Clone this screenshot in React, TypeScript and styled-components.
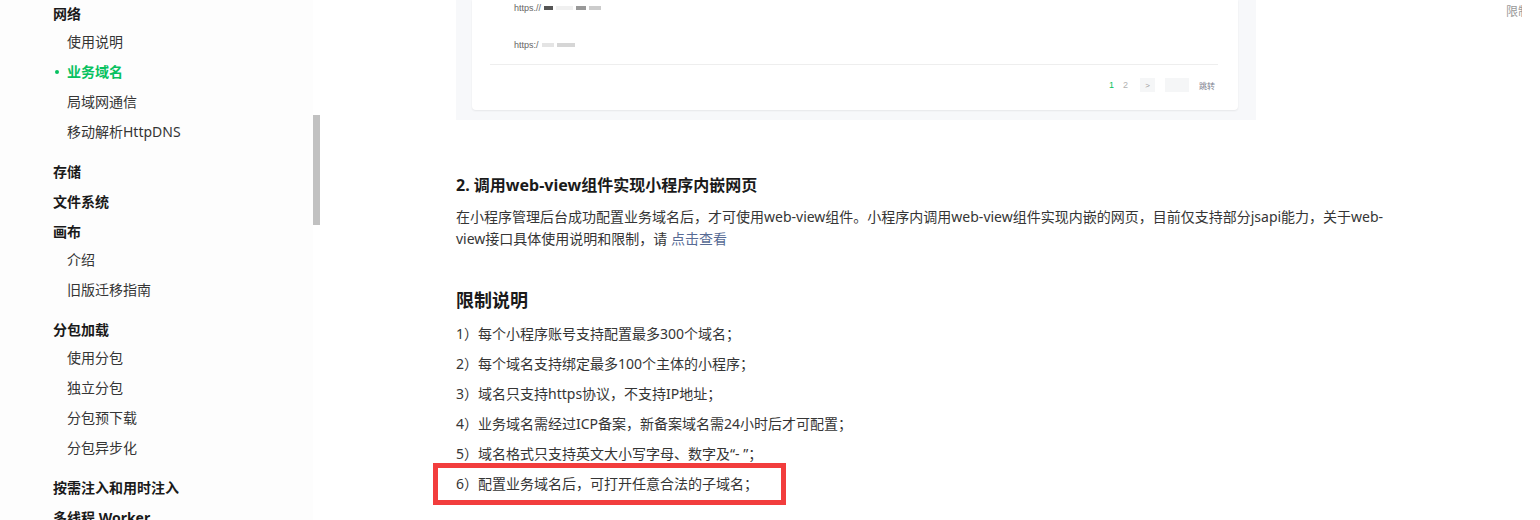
import styled, { createGlobalStyle } from 'styled-components';

const GlobalStyle = createGlobalStyle`
    html, body {
        margin: 0;
        padding: 0;
        background: #ffffff;
        font-family: "Noto Sans", "Noto Sans CJK SC", sans-serif;
        color: #333333;
        overflow: hidden;
    }
`;

const Page = styled.div`
    display: flex;
    width: 1540px;
    height: 520px;
    overflow: hidden;
`;

/* ---------- sidebar ---------- */

const Sidebar = styled.aside`
    display: flex;
    width: 320px;
    flex-shrink: 0;
`;

const Nav = styled.nav`
    width: 313px;
    padding: 2px 0 0 53px;
    box-sizing: border-box;
    background: #fdfdfd;
`;

const Group = styled.div`
    margin-bottom: 6px;
`;

const GroupTitle = styled.div`
    height: 24px;
    line-height: 24px;
    font-size: 14px;
    font-weight: 700;
    color: #1a1a1a;
    white-space: nowrap;
`;

const SubList = styled.ul`
    list-style: none;
    margin: 0;
    padding: 0 0 8px 0;
`;

const SubItem = styled.li<{ $active?: boolean }>`
    position: relative;
    height: 30px;
    line-height: 31px;
    padding-left: 14px;
    font-size: 14px;
    font-weight: ${p => (p.$active ? 700 : 400)};
    color: ${p => (p.$active ? '#07c160' : '#353535')};
    white-space: nowrap;

    &::before {
        content: '';
        display: ${p => (p.$active ? 'block' : 'none')};
        position: absolute;
        left: 2px;
        top: 14px;
        width: 4px;
        height: 4px;
        border-radius: 50%;
        background: #07c160;
    }
`;

const ScrollTrack = styled.div`
    width: 7px;
    background: #ffffff;
`;

const ScrollThumb = styled.div`
    margin-top: 115px;
    height: 110px;
    background: #c1c1c1;
`;

/* ---------- main ---------- */

const Main = styled.main`
    display: flex;
    flex: 1;
    padding-left: 136px;
`;

const Article = styled.article`
    width: 942px;
    flex-shrink: 0;
`;

const Shot = styled.div`
    width: 800px;
    padding: 0 18px 10px 16px;
    box-sizing: border-box;
    background: #f7f8fa;
`;

const ShotCard = styled.div`
    background: #ffffff;
    border-radius: 0 0 4px 4px;
    box-shadow: 0 1px 2px rgba(0, 0, 0, 0.07);
    padding: 0 20px 18px 18px;
`;

const UrlRow = styled.div<{ $gap: number }>`
    display: flex;
    align-items: center;
    height: 16px;
    margin-top: ${p => p.$gap}px;
    padding-left: 24px;
    font-size: 9px;
    color: #666666;
    font-family: "Liberation Sans", sans-serif;
`;

const Blur = styled.span<{ $w: number; $c: string }>`
    display: inline-block;
    width: ${p => p.$w}px;
    height: 4px;
    margin-left: 3px;
    background: ${p => p.$c};
    filter: blur(0.6px);
`;

const Divider = styled.div`
    height: 1px;
    margin-top: 11px;
    background: #eeeeee;
`;

const Pager = styled.div`
    display: flex;
    justify-content: flex-end;
    align-items: center;
    gap: 10px;
    height: 14px;
    margin-top: 13px;
    padding-right: 3px;
    font-size: 9px;
    color: #aaaaaa;
    font-family: "Liberation Sans", "Noto Sans CJK SC", sans-serif;
`;

const PageNum = styled.span<{ $current?: boolean }>`
    color: ${p => (p.$current ? '#07c160' : '#b2b2b2')};
    margin-right: ${p => (p.$current ? -1 : 2)}px;
`;

const PageArrow = styled.span`
    display: flex;
    align-items: center;
    justify-content: center;
    width: 15px;
    height: 14px;
    background: #f5f6f7;
    color: #999999;
    font-size: 8px;
`;

const PageInput = styled.span`
    width: 24px;
    height: 14px;
    background: #f5f6f7;
`;

const PageJump = styled.span`
    color: #7d8190;
    font-size: 8px;
`;

const SectionTitle = styled.h3`
    margin: 53px 0 0 0;
    line-height: 24px;
    font-size: 16px;
    font-weight: 700;
    color: #1a1a1a;
    white-space: nowrap;
`;

const Para = styled.p`
    margin: 9px 0 0 0;
    font-size: 14px;
    line-height: 22px;
    color: #353535;
`;

const Link = styled.a`
    color: #576b95;
    text-decoration: none;
`;

const LimitTitle = styled.h2`
    margin: 37px 0 0 0;
    font-size: 18px;
    line-height: 26px;
    font-weight: 700;
    color: #1a1a1a;
`;

const Rules = styled.ol`
    list-style: none;
    margin: 10px 0 0 0;
    padding: 0;
`;

const Rule = styled.li<{ $marked?: boolean }>`
    position: relative;
    height: 22px;
    line-height: 22px;
    margin-bottom: 8px;
    font-size: 14px;
    color: #353535;
    white-space: nowrap;

    &::after {
        content: '';
        display: ${p => (p.$marked ? 'block' : 'none')};
        position: absolute;
        left: -23px;
        top: -10px;
        width: 353px;
        height: 42px;
        box-sizing: border-box;
        border: 5px solid #f23d3d;
    }
`;

const Toc = styled.div`
    margin-left: 108px;
    width: 16px;
    overflow: hidden;
    padding-top: 4px;
    font-size: 12px;
    line-height: 16px;
    color: #999999;
    white-space: nowrap;
`;

const navGroups: { title: string; items: string[] }[] = [
    { title: '网络', items: ['使用说明', '业务域名', '局域网通信', '移动解析HttpDNS'] },
    { title: '存储', items: [] },
    { title: '文件系统', items: [] },
    { title: '画布', items: ['介绍', '旧版迁移指南'] },
    { title: '分包加载', items: ['使用分包', '独立分包', '分包预下载', '分包异步化'] },
    { title: '按需注入和用时注入', items: [] },
    { title: '多线程 Worker', items: [] },
];

const rules = [
    '1）每个小程序账号支持配置最多300个域名；',
    '2）每个域名支持绑定最多100个主体的小程序；',
    '3）域名只支持https协议，不支持IP地址；',
    '4）业务域名需经过ICP备案，新备案域名需24小时后才可配置；',
    '5）域名格式只支持英文大小写字母、数字及“- ”；',
    '6）配置业务域名后，可打开任意合法的子域名；',
];

function App() {
    return (
        <>
            <GlobalStyle />
            <Page>
                <Sidebar>
                    <Nav>
                        {navGroups.map(g => (
                            <Group key={g.title}>
                                <GroupTitle>{g.title}</GroupTitle>
                                {g.items.length > 0 && (
                                    <SubList>
                                        {g.items.map(it => (
                                            <SubItem key={it} $active={it === '业务域名'}>
                                                {it}
                                            </SubItem>
                                        ))}
                                    </SubList>
                                )}
                            </Group>
                        ))}
                    </Nav>
                    <ScrollTrack>
                        <ScrollThumb />
                    </ScrollTrack>
                </Sidebar>

                <Main>
                    <Article>
                        <Shot>
                            <ShotCard>
                                <UrlRow $gap={0}>
                                    https.//
                                    <Blur $w={9} $c="#555" />
                                    <Blur $w={17} $c="#f0f0f0" />
                                    <Blur $w={10} $c="#999" />
                                    <Blur $w={12} $c="#ccc" />
                                </UrlRow>
                                <UrlRow $gap={21}>
                                    https:/
                                    <Blur $w={12} $c="#e4e4e4" />
                                    <Blur $w={18} $c="#d6d6d6" />
                                </UrlRow>
                                <Divider />
                                <Pager>
                                    <PageNum $current>1</PageNum>
                                    <PageNum>2</PageNum>
                                    <PageArrow>&gt;</PageArrow>
                                    <PageInput />
                                    <PageJump>跳转</PageJump>
                                </Pager>
                            </ShotCard>
                        </Shot>

                        <SectionTitle>2. 调用web-view组件实现小程序内嵌网页</SectionTitle>
                        <Para>
                            在小程序管理后台成功配置业务域名后，才可使用web-view组件。小程序内调用web-view组件实现内嵌的网页，目前仅支持部分jsapi能力，关于web-view接口具体使用说明和限制，请 <Link>点击查看</Link>
                        </Para>

                        <LimitTitle>限制说明</LimitTitle>
                        <Rules>
                            {rules.map((r, i) => (
                                <Rule key={r} $marked={i === rules.length - 1}>
                                    {r}
                                </Rule>
                            ))}
                        </Rules>
                    </Article>
                    <Toc>限制说明</Toc>
                </Main>
            </Page>
        </>
    );
}

export default App;
